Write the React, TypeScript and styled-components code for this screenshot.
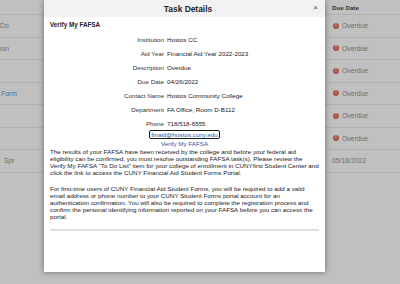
import styled, { createGlobalStyle } from 'styled-components';

const GlobalStyle = createGlobalStyle`
  html, body {
    margin: 0;
    padding: 0;
  }
  body {
    font-family: "Liberation Sans", Arial, sans-serif;
    background: #c0c0c0;
  }
`;

const Screen = styled.div`
  position: relative;
  width: 400px;
  height: 284px;
  overflow: hidden;
  background: #c0c0c0;
`;

/* table behind the overlay */
const BgTable = styled.div`
  display: flex;
  flex-direction: column;
  font-size: 6.8px;
  color: #6c6c6c;
`;

const BgRow = styled.div<{ $head?: boolean }>`
  display: grid;
  grid-template-columns: 327px 1fr;
  align-items: center;
  height: ${(p) => (p.$head ? '14px' : '21.5px')};
  border-bottom: 1px solid #b1b1b1;
`;

const LeftCell = styled.div<{ $indent: number; $link?: boolean }>`
  padding-left: ${(p) => p.$indent}px;
  white-space: nowrap;
  color: ${(p) => (p.$link ? '#4f6f93' : '#6c6c6c')};
`;

const RightCell = styled.div<{ $head?: boolean }>`
  display: flex;
  align-items: center;
  gap: 3px;
  padding-left: 5px;
  font-weight: ${(p) => (p.$head ? 700 : 400)};
  font-size: ${(p) => (p.$head ? '6.2px' : '6.8px')};
  color: ${(p) => (p.$head ? '#333' : '#6e6e6e')};
`;

const AlertDot = styled.span`
  display: inline-flex;
  align-items: center;
  justify-content: center;
  margin-left: 1px;
  width: 6px;
  height: 6px;
  border-radius: 50%;
  background: #a84f4b;
  color: #c9c9c9;
  font-size: 4.5px;
  font-weight: 700;
  line-height: 1;
`;

/* dialog */
const Modal = styled.div`
  position: absolute;
  top: 0;
  left: 44px;
  width: 281px;
  height: 272px;
  background: #fff;
  box-shadow: 0 0 6px rgba(0, 0, 0, 0.45);
  display: flex;
  flex-direction: column;
`;

const Header = styled.div`
  position: relative;
  height: 17px;
  background: #f2f2f2;
  display: flex;
  align-items: center;
  justify-content: center;
  padding-left: 7px;
`;

const Title = styled.h1`
  margin: 0;
  font-size: 8.4px;
  font-weight: 700;
  color: #222;
`;

const CloseButton = styled.button`
  position: absolute;
  right: 7px;
  top: 4px;
  border: 0;
  background: none;
  padding: 0;
  font-family: inherit;
  font-size: 8px;
  line-height: 1;
  color: #444;
`;

const Body = styled.div`
  padding: 4px 6px 0;
  display: flex;
  flex-direction: column;
  font-size: 6.25px;
  color: #222;
`;

const TaskName = styled.h2`
  margin: 0 0 4px;
  font-size: 6.3px;
  font-weight: 700;
  line-height: 7px;
  color: #222;
`;

const DetailGrid = styled.div`
  display: grid;
  grid-template-columns: 114px 1fr;
  grid-auto-rows: 14px;
  column-gap: 3px;
  align-items: center;
`;

const Label = styled.div`
  text-align: right;
  color: #333;
`;

const Value = styled.div`
  color: #222;
`;

const LinkBlock = styled.div`
  display: flex;
  flex-direction: column;
  align-items: center;
  line-height: 7px;
  margin-top: 1px;
  gap: 2px;
`;

const Link = styled.a<{ $focused?: boolean }>`
  color: #2458b3;
  text-decoration: none;
  padding: 0 1px;
  border-radius: 1px;
  outline: ${(p) => (p.$focused ? '1px solid #1c1c1c' : 'none')};
  outline-offset: 0;
`;

const Paragraph = styled.p`
  margin: 1px 0 8px;
  line-height: 7px;
  color: #222;
`;

const Divider = styled.hr`
  margin: 1px 0 0;
  border: 0;
  height: 2px;
  background: #dedede;
`;

const details = [
  ['Institution', 'Hostos CC'],
  ['Aid Year', 'Financial Aid Year 2022-2023'],
  ['Description', 'Overdue'],
  ['Due Date', '04/26/2022'],
  ['Contact Name', 'Hostos Community College'],
  ['Department', 'FA Office, Room D-B112'],
  ['Phone', '718/518-6555'],
];

const bgRows = [
  { left: 'Do', indent: 0, due: 'Overdue' },
  { left: 'ion', indent: 0, due: 'Overdue' },
  { left: '', indent: 0, due: 'Overdue' },
  { left: 'Form', indent: 1, due: 'Overdue', link: true },
  { left: '', indent: 0, due: 'Overdue' },
  { left: '', indent: 0, due: 'Overdue' },
  { left: 'Spr', indent: 4, due: '05/18/2022', date: true },
];

export default function App() {
  return (
    <>
      <GlobalStyle />
      <Screen>
        <BgTable>
          <BgRow $head>
            <LeftCell $indent={0} />
            <RightCell $head>Due Date</RightCell>
          </BgRow>
          {bgRows.map((r, i) => (
            <BgRow key={i}>
              <LeftCell $indent={r.indent} $link={r.link}>
                {r.left}
              </LeftCell>
              <RightCell>
                {!r.date && <AlertDot>!</AlertDot>}
                {r.due}
              </RightCell>
            </BgRow>
          ))}
        </BgTable>

        <Modal>
          <Header>
            <Title>Task Details</Title>
            <CloseButton>×</CloseButton>
          </Header>
          <Body>
            <TaskName>Verify My FAFSA</TaskName>
            <DetailGrid>
              {details.flatMap(([label, value]) => [
                <Label key={label}>{label}</Label>,
                <Value key={label + '-v'}>{value}</Value>,
              ])}
            </DetailGrid>
            <LinkBlock>
              <Link $focused href="#">finaid@hostos.cuny.edu</Link>
              <Link href="#">Verify My FAFSA</Link>
            </LinkBlock>
            <Paragraph>
              The results of your FAFSA have been received by the college and before your federal aid
              eligibility can be confirmed, you must resolve outstanding FAFSA task(s). Please review the
              Verify My FAFSA "To Do List" item for your college of enrollment in CUNYfirst Student Center and
              click the link to access the CUNY Financial Aid Student Forms Portal.
            </Paragraph>
            <Paragraph>
              For first-time users of CUNY Financial Aid Student Forms, you will be required to add a valid
              email address or phone number to your CUNY Student Forms portal account for an
              authentication confirmation. You will also be required to complete the registration process and
              confirm the personal identifying information reported on your FAFSA before you can access the
              portal.
            </Paragraph>
            <Divider />
          </Body>
        </Modal>
      </Screen>
    </>
  );
}
